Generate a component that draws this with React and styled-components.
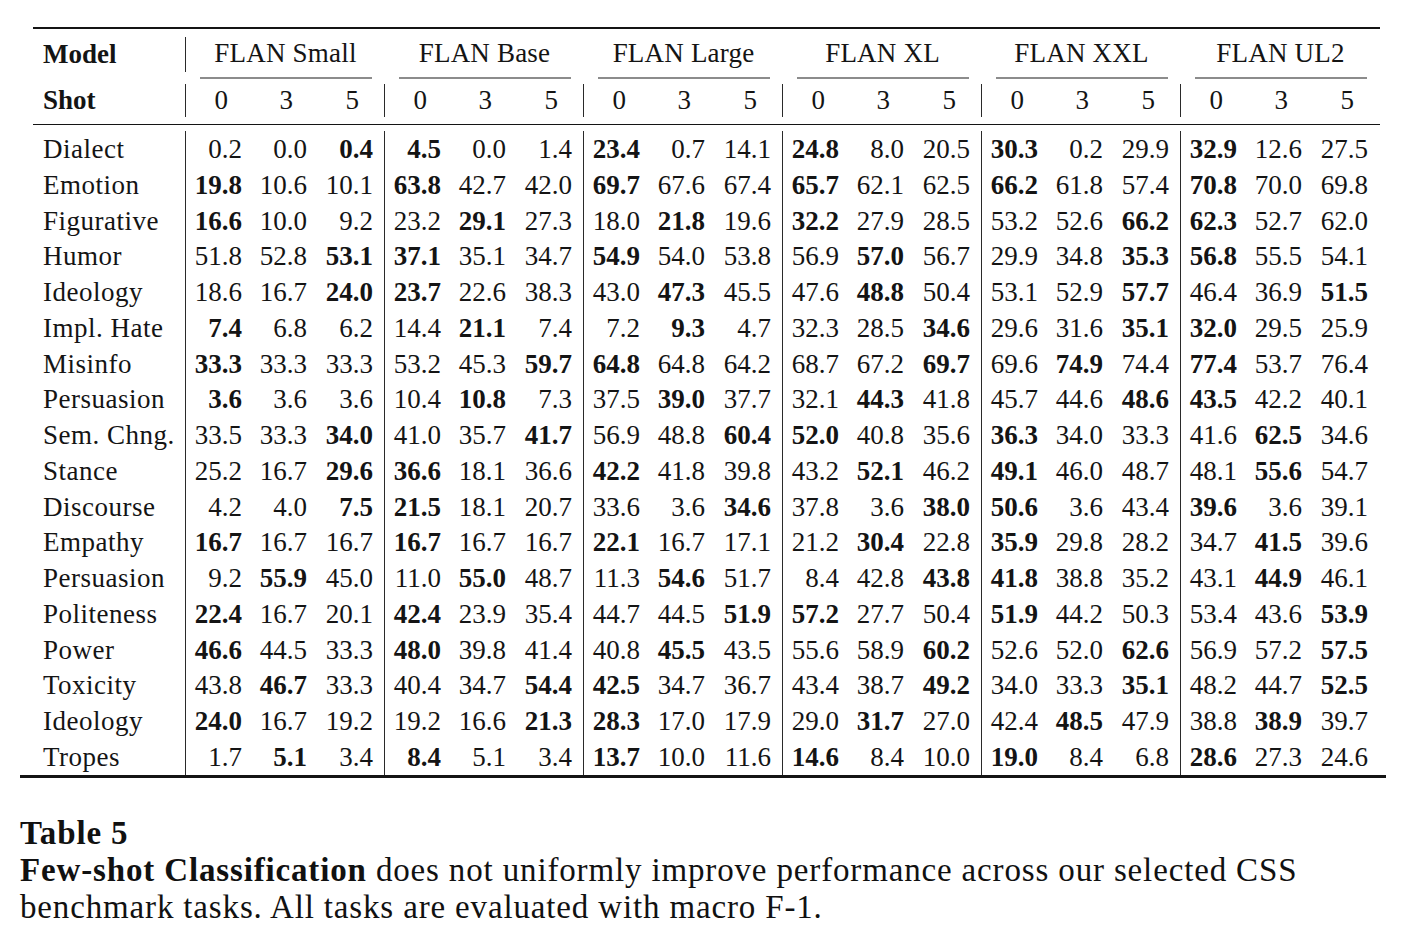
import styled, { createGlobalStyle } from 'styled-components';

const GlobalStyle = createGlobalStyle`
  body {
    margin: 0;
    background: #ffffff;
    color: #141414;
    font-family: "Liberation Serif", "Times New Roman", serif;
  }
`;

const GROUPS = ['FLAN Small', 'FLAN Base', 'FLAN Large', 'FLAN XL', 'FLAN XXL', 'FLAN UL2'];

// a leading * marks a bold (best) value
const ROWS = [
  ['Dialect', '0.2 0.0 *0.4 *4.5 0.0 1.4 *23.4 0.7 14.1 *24.8 8.0 20.5 *30.3 0.2 29.9 *32.9 12.6 27.5'],
  ['Emotion', '*19.8 10.6 10.1 *63.8 42.7 42.0 *69.7 67.6 67.4 *65.7 62.1 62.5 *66.2 61.8 57.4 *70.8 70.0 69.8'],
  ['Figurative', '*16.6 10.0 9.2 23.2 *29.1 27.3 18.0 *21.8 19.6 *32.2 27.9 28.5 53.2 52.6 *66.2 *62.3 52.7 62.0'],
  ['Humor', '51.8 52.8 *53.1 *37.1 35.1 34.7 *54.9 54.0 53.8 56.9 *57.0 56.7 29.9 34.8 *35.3 *56.8 55.5 54.1'],
  ['Ideology', '18.6 16.7 *24.0 *23.7 22.6 38.3 43.0 *47.3 45.5 47.6 *48.8 50.4 53.1 52.9 *57.7 46.4 36.9 *51.5'],
  ['Impl. Hate', '*7.4 6.8 6.2 14.4 *21.1 7.4 7.2 *9.3 4.7 32.3 28.5 *34.6 29.6 31.6 *35.1 *32.0 29.5 25.9'],
  ['Misinfo', '*33.3 33.3 33.3 53.2 45.3 *59.7 *64.8 64.8 64.2 68.7 67.2 *69.7 69.6 *74.9 74.4 *77.4 53.7 76.4'],
  ['Persuasion', '*3.6 3.6 3.6 10.4 *10.8 7.3 37.5 *39.0 37.7 32.1 *44.3 41.8 45.7 44.6 *48.6 *43.5 42.2 40.1'],
  ['Sem. Chng.', '33.5 33.3 *34.0 41.0 35.7 *41.7 56.9 48.8 *60.4 *52.0 40.8 35.6 *36.3 34.0 33.3 41.6 *62.5 34.6'],
  ['Stance', '25.2 16.7 *29.6 *36.6 18.1 36.6 *42.2 41.8 39.8 43.2 *52.1 46.2 *49.1 46.0 48.7 48.1 *55.6 54.7'],
  ['Discourse', '4.2 4.0 *7.5 *21.5 18.1 20.7 33.6 3.6 *34.6 37.8 3.6 *38.0 *50.6 3.6 43.4 *39.6 3.6 39.1'],
  ['Empathy', '*16.7 16.7 16.7 *16.7 16.7 16.7 *22.1 16.7 17.1 21.2 *30.4 22.8 *35.9 29.8 28.2 34.7 *41.5 39.6'],
  ['Persuasion', '9.2 *55.9 45.0 11.0 *55.0 48.7 11.3 *54.6 51.7 8.4 42.8 *43.8 *41.8 38.8 35.2 43.1 *44.9 46.1'],
  ['Politeness', '*22.4 16.7 20.1 *42.4 23.9 35.4 44.7 44.5 *51.9 *57.2 27.7 50.4 *51.9 44.2 50.3 53.4 43.6 *53.9'],
  ['Power', '*46.6 44.5 33.3 *48.0 39.8 41.4 40.8 *45.5 43.5 55.6 58.9 *60.2 52.6 52.0 *62.6 56.9 57.2 *57.5'],
  ['Toxicity', '43.8 *46.7 33.3 40.4 34.7 *54.4 *42.5 34.7 36.7 43.4 38.7 *49.2 34.0 33.3 *35.1 48.2 44.7 *52.5'],
  ['Ideology', '*24.0 16.7 19.2 19.2 16.6 *21.3 *28.3 17.0 17.9 29.0 *31.7 27.0 42.4 *48.5 47.9 38.8 *38.9 39.7'],
  ['Tropes', '1.7 *5.1 3.4 *8.4 5.1 3.4 *13.7 10.0 11.6 *14.6 8.4 10.0 *19.0 8.4 6.8 *28.6 27.3 24.6'],
];

const Page = styled.div`
  padding: 27px 0 0 20px;
`;

const Table = styled.div`
  width: 1366px;
  font-size: 27px;
`;

const Inner = styled.div`
  margin-left: 13px;
  width: 1347px;
`;

const Rule = styled.div`
  height: ${(p) => p.$h}px;
  background: #141414;
`;

const Row = styled.div`
  display: grid;
  grid-template-columns: 153px repeat(6, 199px);
  align-items: start;
  height: ${(p) => p.$h}px;
`;

const HeadLabel = styled.div`
  margin-top: ${(p) => p.$top}px;
  height: ${(p) => p.$h}px;
  line-height: ${(p) => p.$h}px;
  padding-left: 10px;
  font-weight: 700;
  border-right: 1px solid #2a2a2a;
`;

const GroupHead = styled.div`
  padding-top: 7px;
  text-align: center;
`;

const GroupTitle = styled.div`
  height: 35px;
  line-height: 35px;
  letter-spacing: 0.2px;
`;

const CMidRule = styled.div`
  margin: 6px 13px 0 14px;
  height: 1.5px;
  background: #8c8c8c;
`;

const ShotGroup = styled.div`
  margin-top: 7px;
  height: 33px;
  line-height: 33px;
  display: grid;
  grid-template-columns: 56px 65px 66px;
  padding-right: 12px;
  border-left: ${(p) => (p.$first ? 'none' : '1px solid #2a2a2a')};
  box-sizing: border-box;
  margin-left: ${(p) => (p.$first ? '0' : '-1px')};
`;

const ShotCell = styled.span`
  text-align: right;
  padding-right: 14px;
`;

const Body = styled.div`
  padding-top: 6px;
`;

const DataRow = styled.div`
  display: grid;
  grid-template-columns: 153px repeat(6, 199px);
  height: 35.76px;
`;

const RowLabel = styled.div`
  padding: 2px 0 0 10px;
  line-height: 33.76px;
  white-space: nowrap;
  letter-spacing: 0.5px;
`;

const Group = styled.div`
  display: grid;
  grid-template-columns: 56px 65px 66px;
  padding: 2px 12px 0 0;
  line-height: 33.76px;
  border-left: 1px solid #2a2a2a;
  box-sizing: border-box;
  margin-left: -1px;
  width: 200px;
`;

const Num = styled.span`
  text-align: right;
  font-weight: ${(p) => (p.$bold ? 700 : 400)};
`;

const Caption = styled.div`
  margin-top: 37px;
  font-size: 33px;
  line-height: 37px;
  letter-spacing: 0.85px;
  white-space: nowrap;
  color: #111;
`;

const CaptionTitle = styled.div`
  font-weight: 700;
`;

const Lead = styled.b`
  font-weight: 700;
`;

const App = () => (
  <Page>
    <GlobalStyle />
    <Table>
      <Inner>
        <Rule $h={2} />
        <Row $h={48}>
          <HeadLabel $top={8} $h={35}>Model</HeadLabel>
          {GROUPS.map((g) => (
            <GroupHead key={g}>
              <GroupTitle>{g}</GroupTitle>
              <CMidRule />
            </GroupHead>
          ))}
        </Row>
        <Row $h={47}>
          <HeadLabel $top={7} $h={33}>Shot</HeadLabel>
          {GROUPS.map((g, i) => (
            <ShotGroup key={g} $first={i === 0}>
              <ShotCell>0</ShotCell>
              <ShotCell>3</ShotCell>
              <ShotCell>5</ShotCell>
            </ShotGroup>
          ))}
        </Row>
        <Rule $h={1} />
        <Body>
          {ROWS.map(([label, values], r) => {
            const nums = values.split(' ');
            return (
              <DataRow key={r}>
                <RowLabel>{label}</RowLabel>
                {GROUPS.map((g, gi) => (
                  <Group key={g}>
                    {nums.slice(gi * 3, gi * 3 + 3).map((v, k) => (
                      <Num key={k} $bold={v.startsWith('*')}>
                        {v.replace('*', '')}
                      </Num>
                    ))}
                  </Group>
                ))}
              </DataRow>
            );
          })}
        </Body>
      </Inner>
      <Rule $h={3} />
    </Table>
    <Caption>
      <CaptionTitle>Table 5</CaptionTitle>
      <div>
        <Lead>Few-shot Classification</Lead> does not uniformly improve performance across our selected CSS
      </div>
      <div>benchmark tasks. All tasks are evaluated with macro F-1.</div>
    </Caption>
  </Page>
);

export default App;
